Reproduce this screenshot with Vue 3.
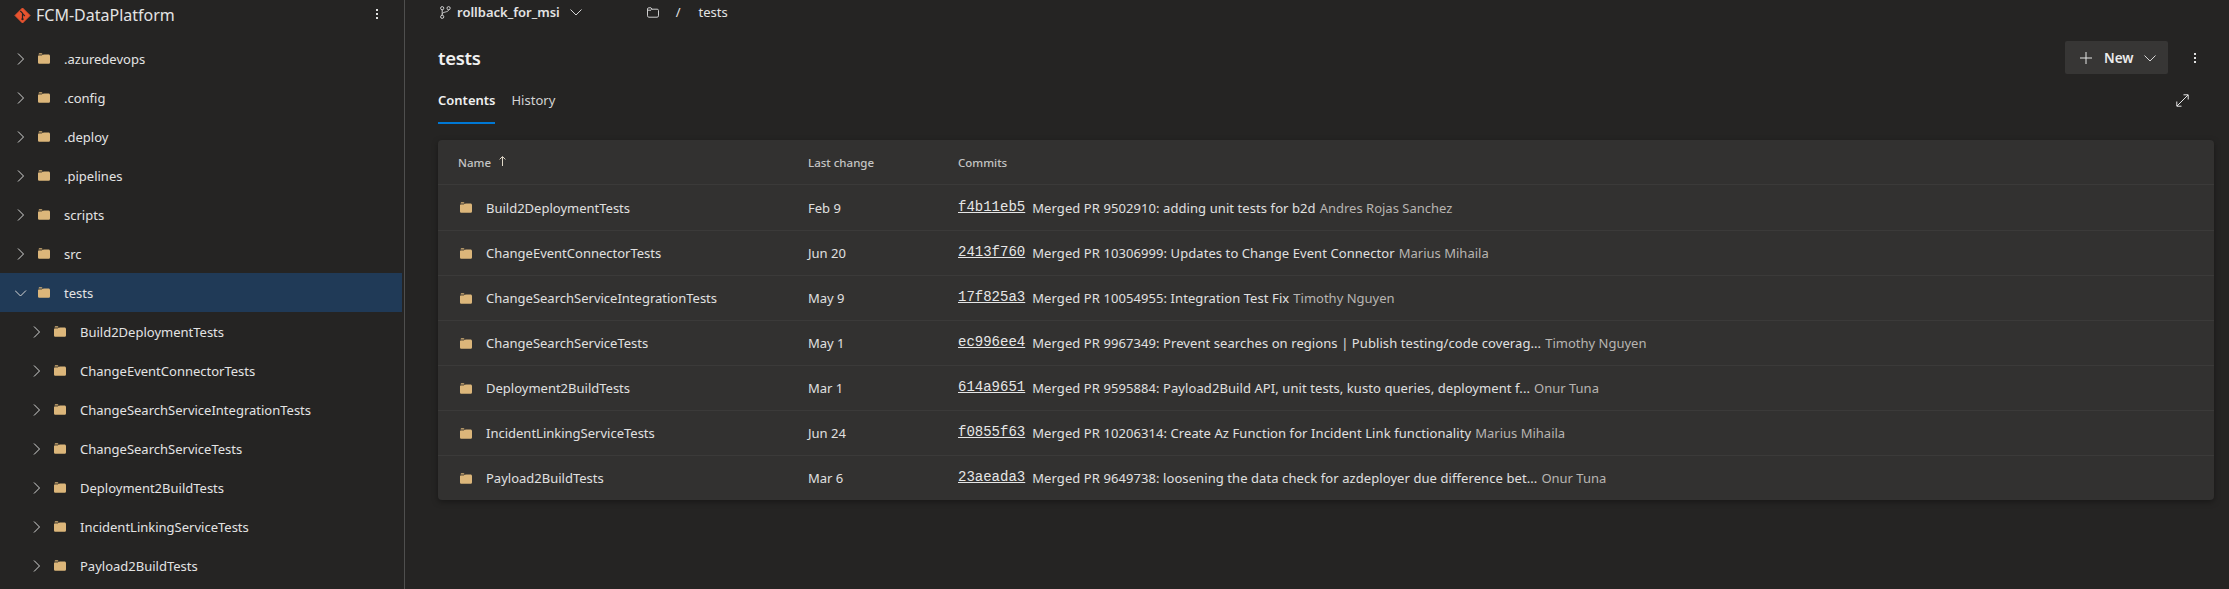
<template>
  <div class="page">
    <aside class="side">
      <div class="repo">
        <svg class="logo" width="17" height="17" viewBox="0 0 17 17">
          <path d="M8.5 1 16 8.5 8.5 16 1 8.5Z" fill="#e8532f" stroke="#e8532f" stroke-linejoin="round" />
          <path d="M6.3 4 8.5 6.2V12.5" fill="none" stroke="#252423" stroke-width="1.2" />
          <path d="M8.5 6.6 10.8 9" fill="none" stroke="#252423" stroke-width="1.2" />
          <circle cx="8.5" cy="12.2" r="1.1" fill="#252423" />
        </svg>
        <span class="repo-name">FCM-DataPlatform</span>
        <span class="kebab"><i></i><i></i><i></i></span>
      </div>
      <div class="tree">
        <div
          v-for="node in tree"
          :key="node.name"
          class="tree-row"
          :class="{ selected: node.open, child: node.child }"
        >
          <svg class="chev" width="12" height="12" viewBox="0 0 12 12">
            <path v-if="node.open" d="M0 3.5 5.5 9 11 3.5" fill="none" stroke="#d6d6d6" stroke-width="1" />
            <path v-else d="M3 .5 8.5 6 3 11.5" fill="none" stroke="#d6d6d6" stroke-width="1" />
          </svg>
          <svg class="folder" width="12" height="11" viewBox="0 0 12 11">
            <path d="M0 3.5C0 2.5 .6 2 1.5 2H4.6L5.8 1.6H10.4C11.4 1.6 12 2.2 12 3.2V9.2C12 10.2 11.4 10.8 10.4 10.8H1.6C.6 10.8 0 10.2 0 9.2Z" fill="#dcb67a" />
            <path d="M.6 1.6C.6 .7 1.1 .3 1.8 .3H3.4C4 .3 4.3 .7 4.7 1.4H.6Z" fill="#dcb67a" />
            <path d="M0 2.3H3.8L5 .9" fill="none" stroke="#5d4f3a" stroke-width=".7" />
          </svg>
          <span>{{ node.name }}</span>
        </div>
      </div>
    </aside>

    <main class="main">
      <div class="crumbs">
        <svg class="branch" width="11" height="13" viewBox="0 0 11 13">
          <circle cx="2.2" cy="2.2" r="1.6" fill="none" stroke="#cfcfcf" />
          <circle cx="8.6" cy="2.2" r="1.6" fill="none" stroke="#cfcfcf" />
          <circle cx="2.2" cy="10.8" r="1.6" fill="none" stroke="#cfcfcf" />
          <path d="M2.2 3.8V9.2M8.6 3.8C8.6 6.5 2.2 5.5 2.2 8.2" fill="none" stroke="#cfcfcf" />
        </svg>
        <strong class="branch-name">rollback_for_msi</strong>
        <svg class="crumb-chev" width="12" height="12" viewBox="0 0 12 12">
          <path d="M.5 3.5 6 9 11.5 3.5" fill="none" stroke="#d6d6d6" />
        </svg>
        <svg class="crumb-folder" width="12" height="11" viewBox="0 0 12 11">
          <path d="M.5 2C.5 1.2 1 .8 1.8 .8H4L5 2.2H10.2C11 2.2 11.5 2.7 11.5 3.4V8.8C11.5 9.6 11 10.2 10.2 10.2H1.8C1 10.2 .5 9.6 .5 8.8Z M.5 3.2H4L5 2.2" fill="none" stroke="#cfcfcf" />
        </svg>
        <span class="slash">/</span>
        <span class="crumb-text">tests</span>
      </div>

      <div class="title-row">
        <h1>tests</h1>
        <div class="actions">
          <button class="new-btn">
            <svg width="12" height="12" viewBox="0 0 12 12">
              <path d="M6 0V12M0 6H12" stroke="#e6e6e6" fill="none" />
            </svg>
            <span>New</span>
            <svg width="12" height="12" viewBox="0 0 12 12">
              <path d="M.5 3.5 6 9 11.5 3.5" fill="none" stroke="#d6d6d6" />
            </svg>
          </button>
          <span class="kebab"><i></i><i></i><i></i></span>
        </div>
      </div>

      <div class="tabs">
        <span class="tab active">Contents</span>
        <span class="tab">History</span>
        <svg class="expand" width="13" height="13" viewBox="0 0 13 13">
          <path d="M1 12 12 1M7.5 .8H12.2V5.5M.8 7.5V12.2H5.5" fill="none" stroke="#e6e6e6" />
        </svg>
      </div>

      <section class="card">
        <div class="row head">
          <div class="name-col">
            <span>Name</span>
            <svg class="arrow" width="7" height="10" viewBox="0 0 7 10">
              <path d="M3.5 10V.8M.6 3.4 3.5 .6 6.4 3.4" fill="none" stroke="#e0d8c8" />
            </svg>
          </div>
          <div>Last change</div>
          <div>Commits</div>
        </div>
        <div v-for="item in items" :key="item.name" class="row">
          <div class="name-col">
            <svg class="folder" width="12" height="11" viewBox="0 0 12 11">
              <path d="M0 3.5C0 2.5 .6 2 1.5 2H4.6L5.8 1.6H10.4C11.4 1.6 12 2.2 12 3.2V9.2C12 10.2 11.4 10.8 10.4 10.8H1.6C.6 10.8 0 10.2 0 9.2Z" fill="#dcb67a" />
              <path d="M.6 1.6C.6 .7 1.1 .3 1.8 .3H3.4C4 .3 4.3 .7 4.7 1.4H.6Z" fill="#dcb67a" />
              <path d="M0 2.3H3.8L5 .9" fill="none" stroke="#5d4f3a" stroke-width=".7" />
            </svg>
            <span>{{ item.name }}</span>
          </div>
          <div>{{ item.date }}</div>
          <div class="commit">
            <a class="hash">{{ item.hash }}</a>
            <span class="msg">{{ item.msg }}</span>
            <span class="author">{{ item.author }}</span>
          </div>
        </div>
      </section>
    </main>
  </div>
</template>

<script setup>
const top = ['.azuredevops', '.config', '.deploy', '.pipelines', 'scripts', 'src']
const kids = [
  'Build2DeploymentTests',
  'ChangeEventConnectorTests',
  'ChangeSearchServiceIntegrationTests',
  'ChangeSearchServiceTests',
  'Deployment2BuildTests',
  'IncidentLinkingServiceTests',
  'Payload2BuildTests'
]

const tree = [
  ...top.map(name => ({ name })),
  { name: 'tests', open: true },
  ...kids.map(name => ({ name, child: true }))
]

const items = [
  { name: kids[0], date: 'Feb 9', hash: 'f4b11eb5', msg: 'Merged PR 9502910: adding unit tests for b2d', author: 'Andres Rojas Sanchez' },
  { name: kids[1], date: 'Jun 20', hash: '2413f760', msg: 'Merged PR 10306999: Updates to Change Event Connector', author: 'Marius Mihaila' },
  { name: kids[2], date: 'May 9', hash: '17f825a3', msg: 'Merged PR 10054955: Integration Test Fix', author: 'Timothy Nguyen' },
  { name: kids[3], date: 'May 1', hash: 'ec996ee4', msg: 'Merged PR 9967349: Prevent searches on regions | Publish testing/code coverag...', author: 'Timothy Nguyen' },
  { name: kids[4], date: 'Mar 1', hash: '614a9651', msg: 'Merged PR 9595884: Payload2Build API, unit tests, kusto queries, deployment f...', author: 'Onur Tuna' },
  { name: kids[5], date: 'Jun 24', hash: 'f0855f63', msg: 'Merged PR 10206314: Create Az Function for Incident Link functionality', author: 'Marius Mihaila' },
  { name: kids[6], date: 'Mar 6', hash: '23aeada3', msg: 'Merged PR 9649738: loosening the data check for azdeployer due difference bet...', author: 'Onur Tuna' }
]
</script>

<style>
body {
  background: #252423;
}
</style>

<style scoped>
.page {
  display: flex;
  width: 2229px;
  height: 589px;
  overflow: hidden;
  background: #252423;
  color: #e3e3e3;
  font-family: "Noto Sans", "Open Sans", sans-serif;
  font-size: 13px;
}

.side {
  flex: none;
  width: 405px;
  padding-right: 2px;
  box-sizing: border-box;
  border-right: 1px solid #4f4f4e;
}

.repo {
  display: flex;
  align-items: center;
  height: 30px;
  padding: 0 16px 0 14px;
  margin-bottom: 9px;
}

.repo-name {
  margin-left: 5px;
  font-size: 16px;
  flex: 1;
}

.kebab {
  display: flex;
  flex-direction: column;
  gap: 2px;
  width: 2px;
}

.kebab i {
  display: block;
  width: 2px;
  height: 2px;
  background: #e0e0e0;
}

.repo .kebab {
  margin: -2px 8px 0 0;
}

.tree-row {
  display: flex;
  align-items: center;
  height: 39px;
  padding-left: 15px;
}

.tree-row.child {
  padding-left: 31px;
}

.tree-row.selected {
  background: #203a57;
}

.chev {
  flex: none;
  margin-right: 11px;
}

.folder {
  flex: none;
}

.tree-row .folder {
  margin-right: 14px;
}

.main {
  flex: 1;
  min-width: 0;
  padding: 0 15px 0 33px;
}

.crumbs {
  display: flex;
  align-items: center;
  height: 24px;
}

.branch {
  margin-left: 2px;
}

.branch-name {
  margin-left: 6px;
  font-weight: 600;
}

.crumb-chev {
  margin-left: 10px;
}

.crumb-folder {
  margin-left: 65px;
}

.slash {
  margin-left: 17px;
}

.crumb-text {
  margin-left: 18px;
}

.title-row {
  display: flex;
  align-items: center;
  justify-content: space-between;
  margin-top: 17px;
  height: 33px;
}

h1 {
  margin: 0;
  font-size: 18.5px;
  font-weight: 600;
  letter-spacing: -0.3px;
  color: #f0f0f0;
}

.actions {
  display: flex;
  align-items: center;
  gap: 26px;
  margin-right: 18px;
}

.new-btn {
  display: flex;
  align-items: center;
  width: 103px;
  height: 33px;
  padding: 0 0 0 15px;
  border: 0;
  border-radius: 2px;
  background: #373635;
  color: #ececec;
  font: 600 13.5px "Noto Sans", sans-serif;
}

.new-btn span {
  margin: 0 10px 0 12px;
}

.tabs {
  display: flex;
  align-items: flex-start;
  gap: 16px;
  height: 50px;
  position: relative;
  margin-top: 16px;
}

.tab {
  height: 33px;
  line-height: 19px;
  padding-top: 1px;
  color: #d4d4d4;
}

.tab.active {
  color: #f0f0f0;
  font-weight: 600;
  border-bottom: 2px solid #0078d4;
  height: 31px;
}

.expand {
  position: absolute;
  right: 25px;
  top: 4px;
}

.card {
  background: #323130;
  border-radius: 4px;
  box-shadow: 0 2px 6px rgba(0, 0, 0, 0.35);
  overflow: hidden;
}

.row {
  display: grid;
  grid-template-columns: 350px 150px 1fr;
  align-items: center;
  height: 45px;
  padding: 0 0 0 20px;
  border-top: 1px solid #3b3a39;
  box-sizing: border-box;
  color: #e0e0e0;
}

.row:nth-child(2) {
  height: 46px;
}

.row.head {
  height: 44px;
  border-top: 0;
  font-size: 11.5px;
  font-weight: 500;
  color: #c4c4c4;
}

.name-col {
  display: flex;
  align-items: center;
  gap: 14px;
}

.name-col .folder {
  margin-left: 2px;
}

.head .name-col {
  gap: 8px;
}

.arrow {
  position: relative;
  top: -1px;
}

.commit {
  display: flex;
  align-items: center;
  white-space: nowrap;
}

.hash {
  font-family: "Liberation Mono", "DejaVu Sans Mono", monospace;
  font-size: 14px;
  text-decoration: underline;
  color: #e6e6e6;
  margin-right: 7px;
  position: relative;
  top: -1px;
}

.msg {
  margin-right: 4px;
  letter-spacing: 0.08px;
}

.author {
  color: #b8b5b2;
}
</style>
